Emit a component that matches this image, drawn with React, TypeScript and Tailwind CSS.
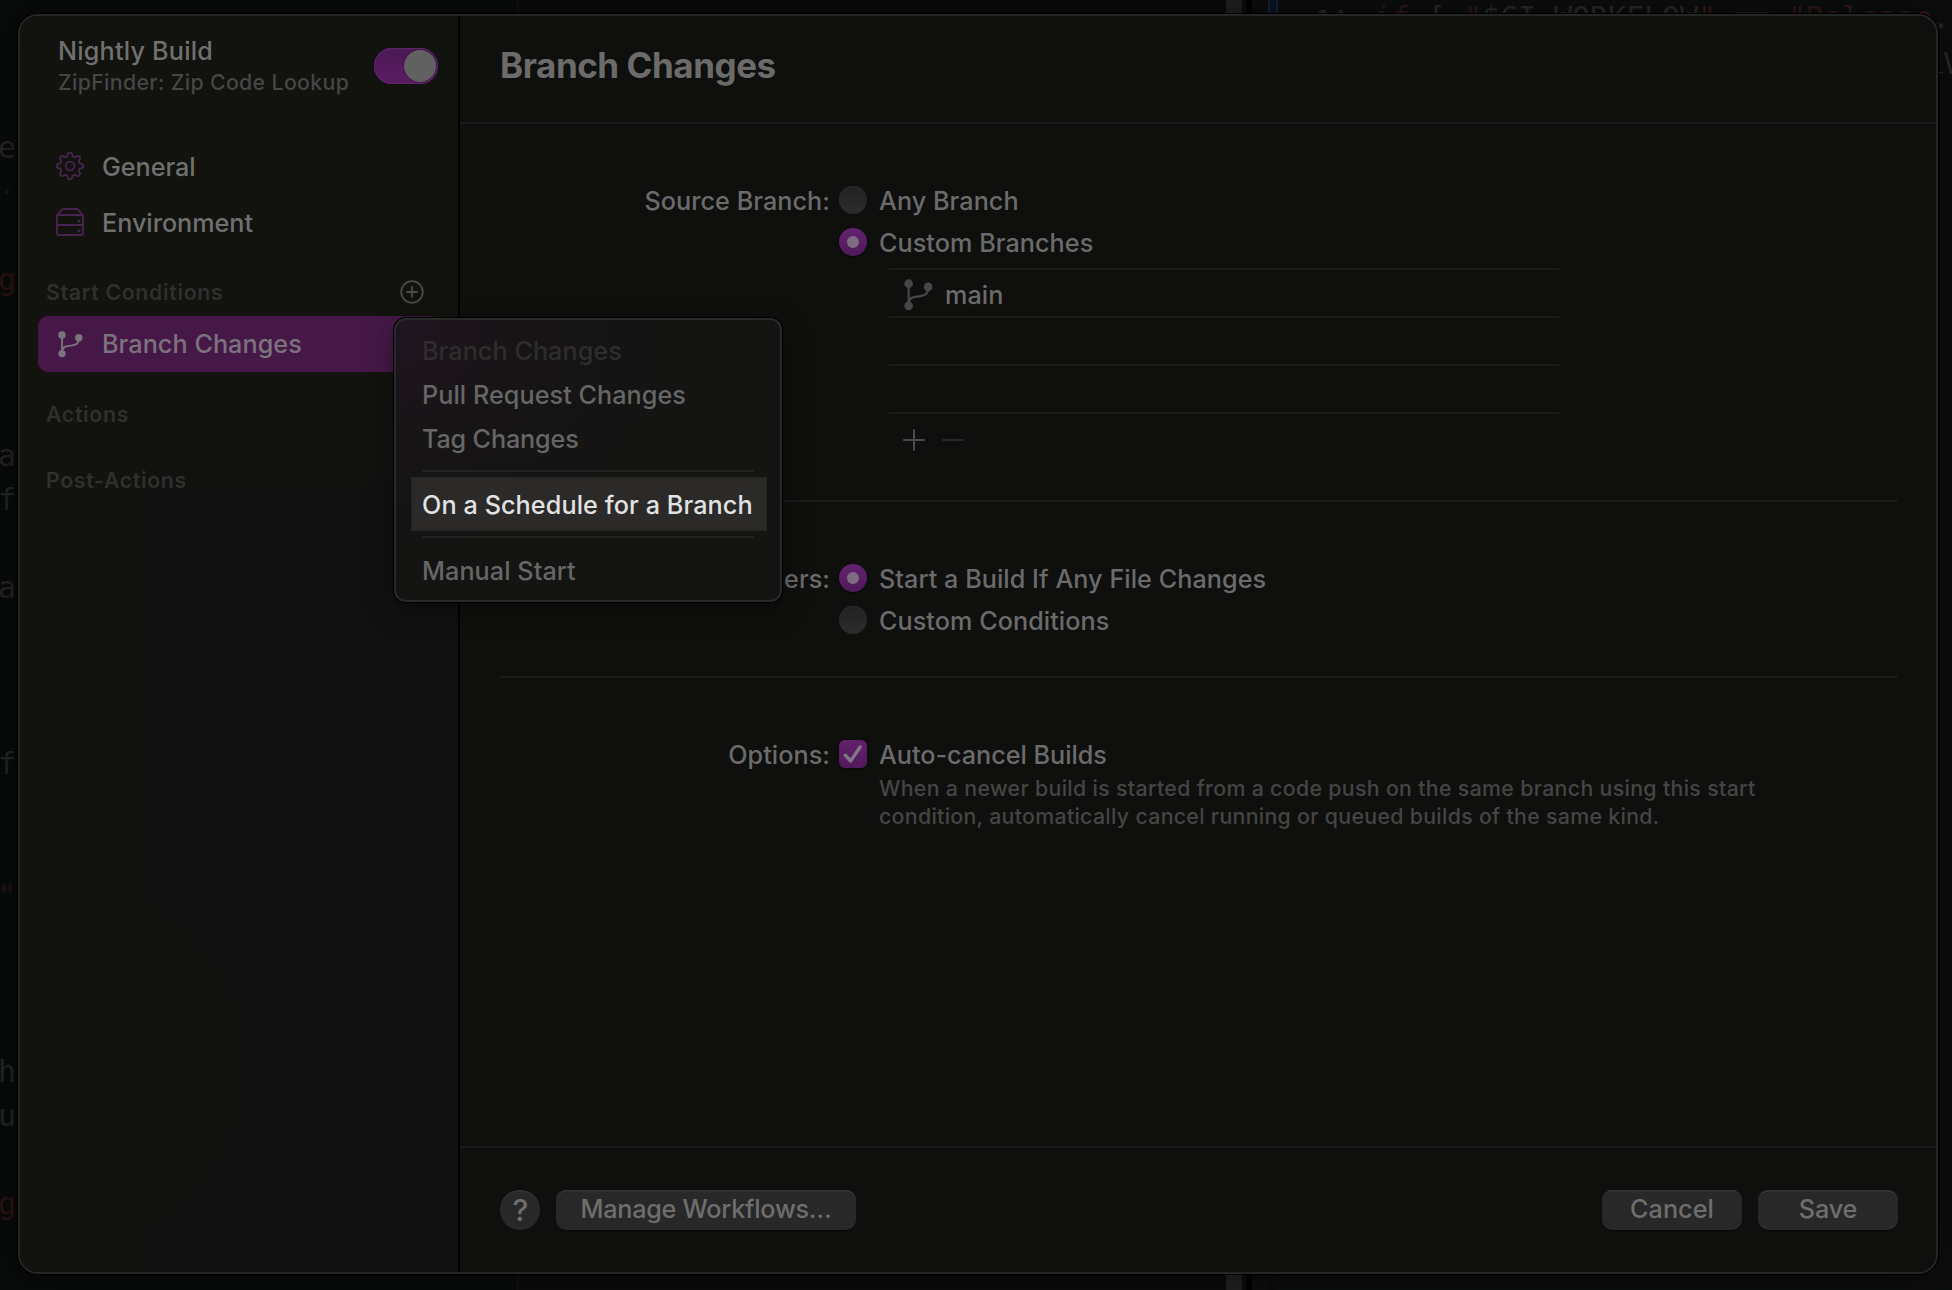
import React from "react";
import clsx from "clsx";

const GEAR_PATH = (() => {
  const points: string[] = [];
  for (let i = 0; i < 192; i++) {
    const a = (i / 192) * Math.PI * 2;
    const r = 11.5 + 1.65 * Math.tanh(2.1 * Math.cos(8 * a));
    points.push(`${(14 + r * Math.cos(a)).toFixed(2)} ${(14 + r * Math.sin(a)).toFixed(2)}`);
  }
  return `M${points.join("L")}Z`;
})();

function GearIcon() {
  return (
    <svg viewBox="0 0 28 28" className="size-7 shrink-0" fill="none" stroke="currentColor" strokeWidth="1.8" strokeLinejoin="round">
      <path d={GEAR_PATH} />
      <circle cx="14" cy="14" r="4.3" />
    </svg>
  );
}

function ServerIcon() {
  return (
    <svg viewBox="0 0 28 28" className="size-7 shrink-0" fill="none" stroke="currentColor" strokeWidth="1.9" strokeLinejoin="round">
      <path d="M1 7.4 5.6 2Q6.4 1 7.8 1H20.2Q21.6 1 22.4 2L27 7.4V25Q27 27 25 27H3Q1 27 1 25Z" />
      <path d="M1 7H27M1 17H27" />
      <circle cx="23" cy="13" r="1.5" fill="currentColor" stroke="none" />
      <circle cx="23" cy="23" r="1.5" fill="currentColor" stroke="none" />
    </svg>
  );
}

function BranchIcon({ className }: { className: string }) {
  return (
    <svg viewBox="0 0 25 27" preserveAspectRatio="none" className={clsx("shrink-0", className)} fill="none" stroke="currentColor" strokeWidth="1.9">
      <path d="M4 4V22M4 21C4.2 15.2 9 15 13 14.6C18.5 14 20.8 12.6 20.8 7" />
      <circle cx="4" cy="4" r="3.7" fill="currentColor" stroke="none" />
      <circle cx="20.8" cy="6.7" r="3.7" fill="currentColor" stroke="none" />
      <circle cx="4" cy="22.6" r="3.7" fill="currentColor" stroke="none" />
    </svg>
  );
}

function Radio({ checked, label }: { checked?: boolean; label: string }) {
  return (
    <div className="flex h-[42px] items-center gap-3">
      <span
        className={clsx(
          "flex size-7 items-center justify-center rounded-full",
          checked
            ? "bg-linear-to-b from-[#652270] to-[#4e1a57] shadow-[0_1px_2px_rgba(0,0,0,0.5)]"
            : "bg-linear-to-b from-[#222222] to-[#2c2c2b] shadow-[inset_0_1px_1px_#2c2c2c]"
        )}
      >
        {checked && <span className="size-3 rounded-full bg-[#7e6d81]" />}
      </span>
      <span className="mt-1">{label}</span>
    </div>
  );
}

function FormSection({ label, children }: { label: string; children: React.ReactNode }) {
  return (
    <section className="grid grid-cols-[330px_1fr] gap-x-[9px] pt-[55px]">
      <div className="mt-px h-[42px] text-right leading-[42px]">{label}</div>
      <div>{children}</div>
    </section>
  );
}

function PushButton({ className, children }: { className: string; children: React.ReactNode }) {
  return (
    <button
      className={clsx(
        "flex h-10 items-center justify-center rounded-[10px] bg-[#282828] text-[#6e6e6e] shadow-[inset_0_1.5px_0.5px_#353535,0_1px_1px_rgba(0,0,0,0.4)]",
        className
      )}
    >
      {children}
    </button>
  );
}

const EDGE_CODE: { glyph: string; color: string }[] = Array.from({ length: 29 }, (_, row) => {
  const glyphs: Record<number, string> = { 2: "e", 3: "·", 5: "g", 9: "a", 10: "f", 12: "a", 16: "f", 19: '"', 23: "h", 24: "u", 26: "g" };
  const color = row === 5 || row === 19 || row === 26 ? "text-[#2a1412]" : row === 3 ? "text-[#161818]" : "text-[#242626]";
  return { glyph: glyphs[row] ?? "", color };
});

function Editor() {
  return (
    <div className="absolute inset-0 flex bg-[#0a0b0b] font-['DejaVu_Sans_Mono','Liberation_Mono',monospace] text-[29.9px] leading-[44px] tracking-normal whitespace-pre">
      <div className="w-[517px] bg-[#090b0b] pt-[38px]">
        {EDGE_CODE.map((line, i) => (
          <div key={i} className={clsx("-ml-0.5 h-11 w-[18px]", line.color)}>
            {line.glyph}
          </div>
        ))}
      </div>
      <div className="w-[709px] border-l-2 border-[#101011] bg-[#0b0b0c]" />
      <div className="w-4 bg-[#202020]" />
      <div className="w-1 bg-[#0d0d0d]" />
      <div className="w-1.5 bg-black" />
      <div className="w-4 bg-[#0d0d0e]" />
      <div className="h-5 w-2.5 border-x-2 border-[#0e2344] bg-[#0d1522]" />
      <div className="flex-1 overflow-hidden bg-[#0c0d0d] pl-[34px]">
        <div className="-mt-1 h-11 text-[#292b2b]">
          <span className="inline-block w-[62px] pl-1 text-[25px]">14</span>
          <span className="text-[#2b1822]">if</span>
          <span> [ </span>
          <span className="text-[#311916]">"</span>
          <span>$CI_WORKFLOW</span>
          <span className="text-[#311916]">"</span>
          <span className="relative -top-0.5"> == </span>
          <span className="text-[#311916]">"Release</span>
          <span>.</span>
        </div>
        <div className="mt-0.5 ml-[613px] text-[#292b2b]">
          <span className="relative -top-2">_</span>V
        </div>
      </div>
    </div>
  );
}

function SidebarHeading({ children, action }: { children: string; action?: React.ReactNode }) {
  return (
    <div className="mt-[18px] flex h-12 items-center justify-between pr-[34px] pl-[26px] text-[21.3px] font-semibold tracking-[0.031em] text-[#2f2f2e]">
      <span className="mt-0.5">{children}</span>
      {action}
    </div>
  );
}

function Sidebar() {
  return (
    <aside className="w-[440px] border-r-2 border-black bg-[#111111] bg-[radial-gradient(ellipse_228px_200px_at_0px_1050px,#12120f_97%,transparent),linear-gradient(to_bottom,#12120f_440px,transparent_490px),linear-gradient(to_right,#12120f_122px,transparent_123px)]">
      <header className="flex items-center justify-between pt-[19px] pr-5 pl-[38px]">
        <div>
          <div className="leading-8 tracking-[0.008em] text-[#707070]">Nightly Build</div>
          <div className="text-[21.3px] leading-[30px] tracking-[0.0161em] text-[#464646]">ZipFinder: Zip Code Lookup</div>
        </div>
        <div className="flex h-9 w-16 items-center justify-end rounded-full bg-linear-to-b from-[#4c1955] to-[#5a1c65] pr-0.5 shadow-[inset_0_0_0_1px_#5d2767]">
          <div className="size-8 rounded-full bg-[#616161] shadow-[0_0_2px_rgba(0,0,0,0.5)]" />
        </div>
      </header>
      <nav className="mt-[41px]">
        {[
          { label: "General", icon: <GearIcon /> },
          { label: "Environment", icon: <ServerIcon /> },
        ].map(({ label, icon }) => (
          <div key={label} className="mx-[18px] flex h-14 items-center gap-[18px] pl-[18px] text-[#707070]">
            <span className="text-[#48234f]">{icon}</span>
            <span className="mt-1 tracking-[-0.001em]">{label}</span>
          </div>
        ))}
        <SidebarHeading
          action={
            <svg viewBox="0 0 24 24" className="size-6 text-[#4a4a4a]" fill="none" stroke="currentColor" strokeWidth="1.8">
              <circle cx="12" cy="12" r="10.8" />
              <path d="M12 7V17M7 12H17" strokeLinecap="round" />
            </svg>
          }
        >
          Start Conditions
        </SidebarHeading>
        <div className="mx-[18px] flex h-14 items-center gap-[19px] rounded-[10px] bg-[#461848] pl-5 text-[#7c727d]">
          <BranchIcon className="h-[27px] w-[25px] text-[#7b747c]" />
          <span className="mt-0.5">Branch Changes</span>
        </div>
        <SidebarHeading>Actions</SidebarHeading>
        <SidebarHeading>Post-Actions</SidebarHeading>
      </nav>
    </aside>
  );
}

function Settings() {
  return (
    <main className="flex flex-1 flex-col bg-[#0f0f0d]">
      <header className="flex h-[108px] items-center border-b-2 border-[#191919] pb-[7px] pl-10">
        <h1 className="text-[35px] font-bold tracking-[-0.013em] text-[#6b6b6b]">Branch Changes</h1>
      </header>
      <div className="flex-1 pr-[38px] pl-10 text-[#6b6b6b]">
        <FormSection label="Source Branch:">
          <Radio label="Any Branch" />
          <Radio label="Custom Branches" checked />
          <div className="mt-[5px] ml-[50px] w-[670px] divide-y-2 divide-[#1b1b1a] border-y-2 border-[#1b1b1a]">
            <div className="flex h-12 items-center gap-3 pt-[3px] pl-[15px]">
              <BranchIcon className="h-[32px] w-[29px] text-[#474747]" />
              <span className="mt-0.5">main</span>
            </div>
            <div className="h-12" />
            <div className="h-[46px]" />
          </div>
          <div className="flex h-[52px] items-center gap-[17px] pl-16">
            <svg viewBox="0 0 22 22" className="size-[22px]" stroke="#4a4a4a" strokeWidth="2" strokeLinecap="round">
              <path d="M1 11H21M11 1V21" />
            </svg>
            <svg viewBox="0 0 22 22" className="size-[22px]" stroke="#282828" strokeWidth="2" strokeLinecap="round">
              <path d="M1 11H21" />
            </svg>
          </div>
        </FormSection>
        <hr className="mt-[34px] border-t-2 border-[#1a1a19]" />
        <FormSection label="Files and Folders:">
          <Radio label="Start a Build If Any File Changes" checked />
          <Radio label="Custom Conditions" />
        </FormSection>
        <hr className="mt-[35px] border-t-2 border-[#1a1a19]" />
        <FormSection label="Options:">
          <div className="flex h-[42px] items-center gap-3">
            <span className="flex size-7 items-center justify-center rounded-md bg-linear-to-b from-[#622169] to-[#501a5c] shadow-[0_1px_2px_rgba(0,0,0,0.5)]">
              <svg viewBox="0 0 28 28" className="size-7" fill="none" stroke="#857588" strokeWidth="3.4" strokeLinecap="round" strokeLinejoin="round">
                <path d="M6.3 15.2 11.6 21 21.2 7" />
              </svg>
            </span>
            <span className="mt-1 tracking-[-0.001em]">Auto-cancel Builds</span>
          </div>
          <p className="-mt-px pl-10 text-[21.3px] leading-7 tracking-[0.0157em] text-[#454545]">
            When a newer build is started from a code push on the same branch using this start
            <br />
            <span className="tracking-[0.0148em]">condition, automatically cancel running or queued builds of the same kind.</span>
          </p>
        </FormSection>
      </div>
      <footer className="flex h-[126px] gap-4 border-t-2 border-[#191919] pt-[42px] pr-[38px] pl-10">
        <button className="flex size-10 items-center justify-center rounded-full bg-[#282828] pl-px text-[30px] text-[#6e6e6e] shadow-[inset_0_1.5px_0.5px_#333333]">
          ?
        </button>
        <PushButton className="mr-auto w-[300px] tracking-[-0.0102em]">Manage Workflows…</PushButton>
        <PushButton className="w-[140px]">Cancel</PushButton>
        <PushButton className="w-[140px] tracking-[-0.006em]">Save</PushButton>
      </footer>
    </main>
  );
}

function StartConditionMenu() {
  return (
    <div className="absolute top-[318px] left-[394px] h-[284px] w-[388px] rounded-xl border-2 border-[#292929] bg-[#141413] bg-[radial-gradient(ellipse_260px_220px_at_0px_10px,#201420,#171415_50%,#141413)] pt-[9px] text-[#666666] shadow-[0_0_0_1px_#000,0_8px_30px_rgba(0,0,0,0.4)]">
      <div className="h-11 px-[26px] leading-11 text-[#2e2c2d]">Branch Changes</div>
      <div className="h-11 px-[26px] leading-11">Pull Request Changes</div>
      <div className="h-11 px-[26px] leading-11 tracking-[-0.006em]">Tag Changes</div>
      <hr className="mx-[26px] mt-[9px] border-t-2 border-[#212120]" />
      <div className="mt-[5px] mr-[13px] ml-[15px] h-[54px] border border-[#242423] bg-[#2b2a29] pl-2.5 leading-[54px] tracking-[0.0035em] text-[#e2e2e2]">
        On a Schedule for a Branch
      </div>
      <hr className="mx-[26px] mt-[5px] border-t-2 border-[#212120]" />
      <div className="mt-[11px] h-11 px-[26px] leading-11">Manual Start</div>
    </div>
  );
}

export default function App() {
  return (
    <div className="relative h-[1290px] w-[1952px] overflow-hidden pt-3.5 pl-[18px] font-['Inter',sans-serif] text-[25.2px] font-medium tracking-[0.002em]">
      <Editor />
      <div className="relative flex h-[1260px] w-[1920px] overflow-hidden rounded-[20px] border-2 border-[#262626] shadow-[0_0_0_1px_#000,0_0_40px_rgba(0,0,0,0.5)]">
        <Sidebar />
        <Settings />
      </div>
      <StartConditionMenu />
    </div>
  );
}
